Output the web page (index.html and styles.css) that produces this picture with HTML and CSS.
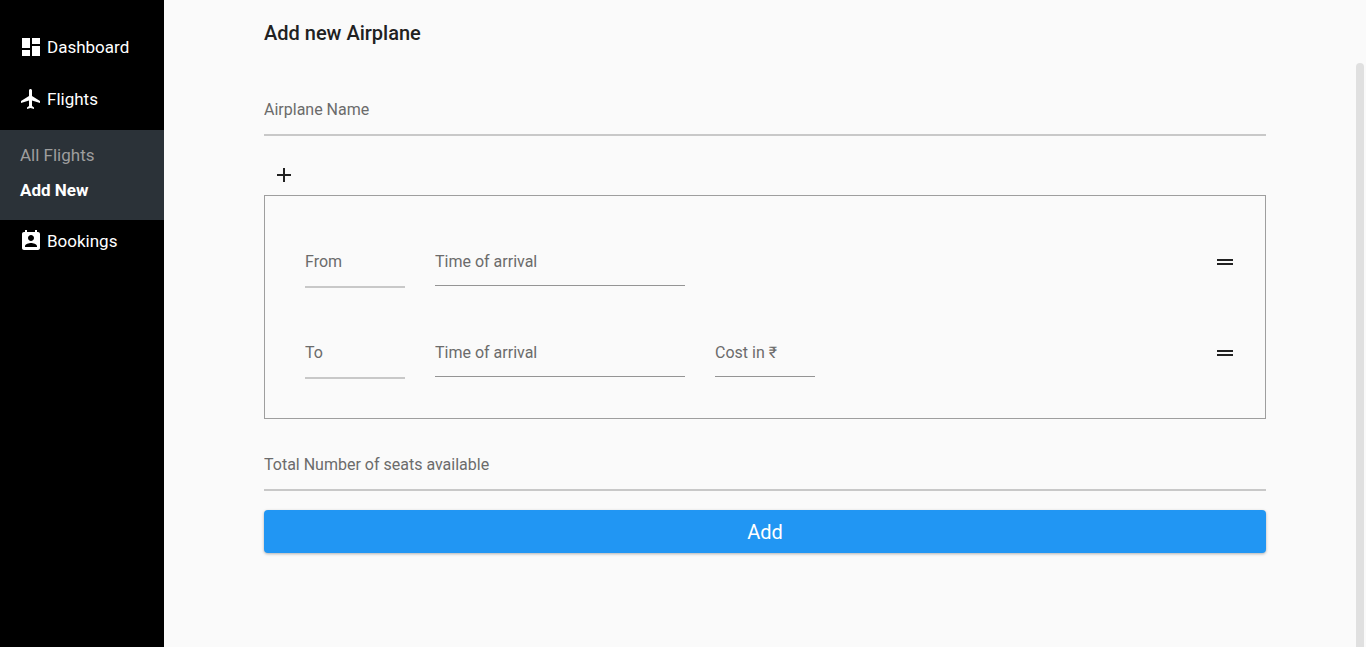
FILE: index.html
```html
<!DOCTYPE html>
<html lang="en">
<head>
<meta charset="utf-8">
<meta name="viewport" content="width=device-width, initial-scale=1">
<title>Add new Airplane</title>
<link rel="stylesheet" href="styles.css">
</head>
<body>
<nav class="sidebar" aria-label="Main">
  <a class="nav-item" href="#dashboard">
    <svg class="icon" viewBox="0 0 24 24" aria-hidden="true"><path d="M3 13h8V3H3v10zm0 8h8v-6H3v6zm10 0h8V11h-8v10zm0-18v6h8V3h-8z"/></svg>
    Dashboard
  </a>
  <a class="nav-item" href="#flights">
    <svg class="icon" viewBox="0 0 24 24" aria-hidden="true"><path d="M21 16v-2l-8-5V3.500c0-.83-.67-1.500-1.500-1.500S10 2.670 10 3.500V9l-8 5v2l8-2.500V19l-2 1.500V22l3.500-1 3.500 1v-1.500L13 19v-5.500l8 2.500z"/></svg>
    Flights
  </a>
  <div class="subnav">
    <a class="sub-item" href="#all">All Flights</a>
    <a class="sub-item active" href="#new" aria-current="page">Add New</a>
  </div>
  <a class="nav-item nav-last" href="#bookings">
    <svg class="icon" viewBox="0 0 24 24" aria-hidden="true"><path d="M19 3h-1V1h-2v2H8V1H6v2H5c-1.110 0-2 .9-2 2v14c0 1.100.89 2 2 2h14c1.100 0 2-.9 2-2V5c0-1.100-.9-2-2-2zm-7 3c1.660 0 3 1.340 3 3s-1.340 3-3 3-3-1.340-3-3 1.340-3 3-3zm6 12H6v-1c0-2 4-3.100 6-3.100s6 1.100 6 3.100v1z"/></svg>
    Bookings
  </a>
</nav>
<main class="content">
  <h1 class="title">Add new Airplane</h1>
  <form class="form">
    <input class="field thick" type="text" placeholder="Airplane Name" aria-label="Airplane Name">
    <button class="icon-button add-stop" type="button" aria-label="Add stop">
      <svg class="icon" viewBox="0 0 24 24" aria-hidden="true"><path d="M19 13h-6v6h-2v-6H5v-2h6V5h2v6h6v2z"/></svg>
    </button>
    <div class="stops">
      <div class="stop">
        <input class="field thick short" type="text" placeholder="From" aria-label="From">
        <input class="field long" type="text" placeholder="Time of arrival" aria-label="Time of arrival">
        <button class="icon-button handle" type="button" aria-label="Reorder From">
          <svg class="icon" viewBox="0 0 24 24" aria-hidden="true"><path d="M20 9H4v2h16V9zM4 15h16v-2H4v2z"/></svg>
        </button>
      </div>
      <div class="stop">
        <input class="field thick short" type="text" placeholder="To" aria-label="To">
        <input class="field long" type="text" placeholder="Time of arrival" aria-label="Time of arrival at destination">
        <input class="field short" type="text" placeholder="Cost in ₹" aria-label="Cost in ₹">
        <button class="icon-button handle" type="button" aria-label="Reorder To">
          <svg class="icon" viewBox="0 0 24 24" aria-hidden="true"><path d="M20 9H4v2h16V9zM4 15h16v-2H4v2z"/></svg>
        </button>
      </div>
    </div>
    <input class="field thick" type="text" placeholder="Total Number of seats available" aria-label="Total Number of seats available">
    <button class="submit" type="submit">Add</button>
  </form>
  <div class="scroll-thumb" aria-hidden="true"></div>
</main>
</body>
</html>
```

FILE: styles.css
```css
* {
  box-sizing: border-box;
}

body {
  display: flex;
  min-height: 100vh;
  margin: 0;
  background: #fafafa;
  color: #212121;
  font-family: Roboto, "Noto Sans", sans-serif;
  font-size: 16px;
}

.icon {
  display: block;
  flex: none;
  width: 24px;
  height: 24px;
  fill: currentColor;
}

.sidebar {
  flex: none;
  width: 164px;
  padding-top: 21px;
  background: #000;
  font-size: 17px;
}

.nav-item {
  display: flex;
  align-items: center;
  gap: 4px;
  height: 52px;
  padding-left: 19px;
  color: #fff;
  text-decoration: none;
}

.nav-item.nav-last {
  height: 42px;
}

.subnav {
  display: flex;
  flex-direction: column;
  gap: 15px;
  margin-top: 5px;
  padding: 15px 20px 20px;
  background: #2b3238;
}

.sub-item {
  color: #9e9e9e;
  line-height: 20px;
  text-decoration: none;
}

.sub-item.active {
  color: #fff;
  font-weight: 700;
}

.content {
  position: relative;
  flex: 1;
  padding: 20px 100px;
}

.title {
  margin: 0 0 39px;
  font-size: 20px;
  font-weight: 500;
  line-height: 26px;
}

.form {
  display: flex;
  flex-direction: column;
}

.field {
  width: 100%;
  height: 49px;
  padding: 0;
  border: 0;
  border-bottom: 1px solid #949494;
  border-radius: 0;
  outline: 0;
  background: transparent;
  color: #212121;
  font: inherit;
}

.field::placeholder {
  color: #6b6b6b;
  opacity: 1;
}

.field.thick {
  height: 51px;
  padding-bottom: 1px;
  border-bottom: 2px solid #c8c8c8;
}

.field.short {
  width: 100px;
}

.field.long {
  width: 250px;
}

.icon-button {
  padding: 0;
  border: 0;
  background: transparent;
  color: #212121;
}

.add-stop {
  align-self: flex-start;
  margin: 27px 8px 8px;
}

.stops {
  display: flex;
  flex-direction: column;
  gap: 40px;
  margin-bottom: 21px;
  padding: 41px 28px 39px 40px;
  border: 1px solid #9e9e9e;
}

.stop {
  display: flex;
  gap: 30px;
}

.handle {
  align-self: flex-start;
  margin-top: 13px;
  margin-left: auto;
}

.submit {
  height: 43px;
  margin-top: 19px;
  border: 0;
  border-radius: 4px;
  background: #2196f3;
  box-shadow: 0 1px 3px rgba(0, 0, 0, 0.3);
  color: #fff;
  font: inherit;
  font-size: 20px;
}

.scroll-thumb {
  position: absolute;
  top: 63px;
  right: 2px;
  bottom: 0;
  width: 8px;
  border-radius: 4px 4px 0 0;
  background: #e0e0e0;
}
```
